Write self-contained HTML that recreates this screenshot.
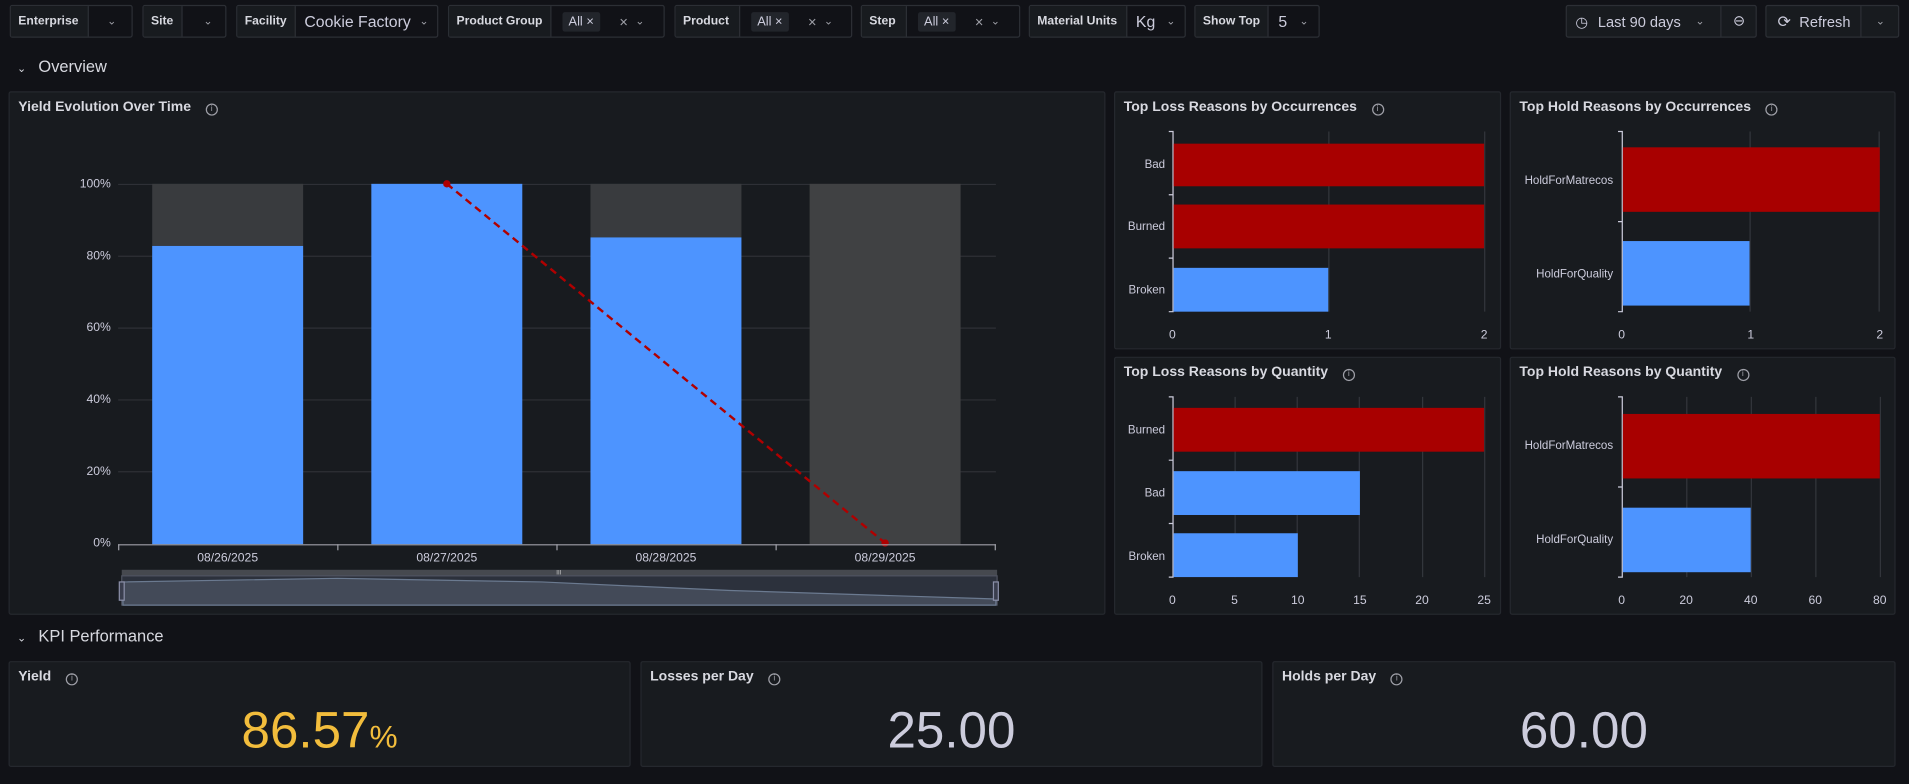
<!DOCTYPE html>
<html><head><meta charset="utf-8"><style>
*{box-sizing:border-box;margin:0;padding:0}
html,body{width:1909px;height:784px;overflow:hidden;background:#111217}
#w{position:absolute;left:0;top:0;width:1568px;height:644px;transform:scale(1.21747);transform-origin:0 0;font-family:"Liberation Sans",sans-serif;color:#ccccdc}
.a{position:absolute}
.box{position:absolute;top:4px;height:27px;border:1px solid #2c2f35;background:#111217;border-radius:2px;font-size:12px;display:flex;align-items:center;white-space:nowrap}
.lb{height:100%;display:flex;align-items:center;padding:0 6px;background:#181b1f;border-right:1px solid #2c2f35;font-weight:bold;font-size:10px;color:#d8d9e0;white-space:nowrap;overflow:hidden;flex:none}
.chip{background:#22252b;padding:2px 5px;font-size:10.5px;border-radius:2px;margin-left:9px}
.chev{font-size:9px;color:#9fa0a8}
.pan{position:absolute;background:#181b1f;border:1px solid #25282e;border-radius:2px}
.pt{position:absolute;left:7px;top:6px;font-size:11.5px;font-weight:bold;color:#d8d9e0;white-space:nowrap}
.i{display:inline-block;width:10px;height:10px;border:1px solid #9fa0a8;border-radius:50%;margin-left:12px;vertical-align:0px;font-size:7px;text-align:center;line-height:8px;color:#9fa0a8;font-weight:normal}
.sec{position:absolute;left:14px;font-size:13.5px;color:#d8d9e0}
.kv{position:absolute;top:32px;left:0;right:0;text-align:center;font-size:42px;color:#ccccdc}
</style></head><body><div id="w">
<div class="box" style="left:8px;width:101px"><div class="lb" style="width:64px">Enterprise</div><span class="chev" style="margin-left:15px">⌄</span></div>
<div class="box" style="left:117px;width:69px"><div class="lb" style="width:32px">Site</div><span class="chev" style="margin-left:17px">⌄</span></div>
<div class="box" style="left:194px;width:166px"><div class="lb" style="width:48px">Facility</div><span style="margin-left:7px;font-size:13px">Cookie Factory</span><span class="chev" style="margin-left:7px">⌄</span></div>
<div class="box" style="left:368px;width:178px"><div class="lb" style="width:84px">Product Group</div><span class="chip">All ×</span><span style="margin-left:16px;color:#9fa0a8">×</span><span class="chev" style="margin-left:6px">⌄</span></div>
<div class="box" style="left:554px;width:146px"><div class="lb" style="width:53px">Product</div><span class="chip">All ×</span><span style="margin-left:16px;color:#9fa0a8">×</span><span class="chev" style="margin-left:6px">⌄</span></div>
<div class="box" style="left:707px;width:131px"><div class="lb" style="width:37px">Step</div><span class="chip">All ×</span><span style="margin-left:16px;color:#9fa0a8">×</span><span class="chev" style="margin-left:6px">⌄</span></div>
<div class="box" style="left:845px;width:129px"><div class="lb" style="width:80px">Material Units</div><span style="margin-left:7px;font-size:13px">Kg</span><span class="chev" style="margin-left:9px">⌄</span></div>
<div class="box" style="left:981px;width:103px"><div class="lb" style="width:60px">Show Top</div><span style="margin-left:8px;font-size:13px">5</span><span class="chev" style="margin-left:10px">⌄</span></div>
<div class="box" style="left:1286px;width:157px;background:#181b1f"><span style="margin-left:7px;font-size:12px">◷</span><span style="margin-left:8px;font-size:12px">Last 90 days</span><span class="chev" style="margin-left:12px">⌄</span><span style="position:absolute;left:126px;top:0;bottom:0;border-left:1px solid #2c2f35;width:30px;text-align:center;line-height:25px">⊖</span></div>
<div class="box" style="left:1450px;width:110px;background:#181b1f"><span style="margin-left:9px;font-size:13px">⟳</span><span style="margin-left:7px;font-size:12px">Refresh</span><span style="position:absolute;left:77px;top:0;bottom:0;border-left:1px solid #2c2f35;width:32px;text-align:center;line-height:25px" class="chev">⌄</span></div>

<div class="sec" style="top:47px"><span style="font-size:9px;margin-right:10px">⌄</span>Overview</div>
<div class="sec" style="top:515px"><span style="font-size:9px;margin-right:10px">⌄</span>KPI Performance</div>

<div class="pan" style="left:7px;top:75px;width:901px;height:430px"><div class="pt">Yield Evolution Over Time<span class="i">i</span></div></div>
<svg class="a" style="left:0;top:0" width="1568" height="644">
<g stroke="#2e3036" stroke-width="1">
<line x1="97" x2="818" y1="151.5" y2="151.5"/><line x1="97" x2="818" y1="210.5" y2="210.5"/><line x1="97" x2="818" y1="269.5" y2="269.5"/><line x1="97" x2="818" y1="328.5" y2="328.5"/><line x1="97" x2="818" y1="387.5" y2="387.5"/></g>
<g fill="#393b3e"><rect x="125" y="151" width="124" height="51"/><rect x="485" y="151" width="124" height="44"/></g>
<rect x="665" y="151" width="124" height="296" fill="#404143"/>
<g fill="#4d94ff"><rect x="125" y="202" width="124" height="245"/><rect x="305" y="151" width="124" height="296"/><rect x="485" y="195" width="124" height="252"/></g>
<line x1="367" y1="151" x2="727" y2="446" stroke="#b00000" stroke-width="2" stroke-dasharray="6,4"/>
<circle cx="367" cy="151" r="3" fill="#b00000"/><circle cx="727" cy="446" r="3" fill="#b00000"/>
<g stroke="#9fa0a8"><line x1="97" x2="818" y1="447.5" y2="447.5"/><line x1="97.5" x2="97.5" y1="447" y2="452"/><line x1="277.5" x2="277.5" y1="447" y2="452"/><line x1="457.5" x2="457.5" y1="447" y2="452"/><line x1="637.5" x2="637.5" y1="447" y2="452"/><line x1="817.5" x2="817.5" y1="447" y2="452"/></g>
<rect x="100" y="468" width="719" height="5" fill="#46494f"/>
<rect x="100" y="473" width="719" height="24" fill="#2c313c" stroke="#4f5360"/>
<path d="M101 478 L277 475 L445 478 L600 485 L818 492 L818 497 L101 497Z" fill="#434a58" stroke="#6b7a90" stroke-width="1"/>
<rect x="98" y="478" width="4" height="15" fill="#3a3e4e" stroke="#8a8fa8"/><rect x="816" y="478" width="4" height="15" fill="#3a3e4e" stroke="#8a8fa8"/>
<text x="459" y="472" font-size="5" fill="#ccc" text-anchor="middle">III</text>
<g font-size="10" fill="#ccccdc" font-family="Liberation Sans" text-anchor="end">
<text x="91" y="154">100%</text><text x="91" y="213">80%</text><text x="91" y="272">60%</text><text x="91" y="331">40%</text><text x="91" y="390">20%</text><text x="91" y="449">0%</text></g>
<g font-size="10" fill="#ccccdc" font-family="Liberation Sans" text-anchor="middle">
<text x="187" y="461">08/26/2025</text><text x="367" y="461">08/27/2025</text><text x="547" y="461">08/28/2025</text><text x="727" y="461">08/29/2025</text></g>
</svg>

<div class="pan" style="left:915px;top:75px;width:318px;height:212px"><div class="pt">Top Loss Reasons by Occurrences<span class="i">i</span></div></div>
<div class="pan" style="left:1240px;top:75px;width:317px;height:212px"><div class="pt">Top Hold Reasons by Occurrences<span class="i">i</span></div></div>
<div class="pan" style="left:915px;top:293px;width:318px;height:212px"><div class="pt">Top Loss Reasons by Quantity<span class="i">i</span></div></div>
<div class="pan" style="left:1240px;top:293px;width:317px;height:212px"><div class="pt">Top Hold Reasons by Quantity<span class="i">i</span></div></div>
<svg class="a" style="left:0;top:0" width="1568" height="644" font-family="Liberation Sans" font-size="10">
<g stroke="#33363c"><line x1="1091.5" x2="1091.5" y1="108" y2="256"/><line x1="1219.5" x2="1219.5" y1="108" y2="256"/>
<line x1="1437.5" x2="1437.5" y1="108" y2="256"/><line x1="1543.5" x2="1543.5" y1="108" y2="256"/>
<line x1="1014.5" x2="1014.5" y1="326" y2="474"/><line x1="1065.5" x2="1065.5" y1="326" y2="474"/><line x1="1116.5" x2="1116.5" y1="326" y2="474"/><line x1="1168.5" x2="1168.5" y1="326" y2="474"/><line x1="1219.5" x2="1219.5" y1="326" y2="474"/>
<line x1="1385.5" x2="1385.5" y1="326" y2="474"/><line x1="1438.5" x2="1438.5" y1="326" y2="474"/><line x1="1491.5" x2="1491.5" y1="326" y2="474"/><line x1="1544.5" x2="1544.5" y1="326" y2="474"/></g>
<g stroke="#ccccdc" fill="none"><path d="M960 108H963.5V256H960M960 160H963M960 212H963"/><path d="M1329 108H1332.5V256H1329M1329 182H1332"/>
<path d="M960 326H963.5V474H960M960 378H963M960 430H963"/><path d="M1329 326H1332.5V474H1329M1329 400H1332"/></g>
<g fill="#a80000"><rect x="964" y="118" width="255" height="35"/><rect x="964" y="168" width="255" height="36"/><rect x="1333" y="121" width="211" height="53"/><rect x="964" y="335" width="255" height="36"/><rect x="1333" y="340" width="211" height="53"/></g>
<g fill="#4d94ff"><rect x="964" y="220" width="127" height="36"/><rect x="1333" y="198" width="104" height="53"/><rect x="964" y="387" width="153" height="36"/><rect x="964" y="438" width="102" height="36"/><rect x="1333" y="417" width="105" height="53"/></g>
<g fill="#ccccdc" text-anchor="end" font-size="9.5"><text x="957" y="138">Bad</text><text x="957" y="189">Burned</text><text x="957" y="241">Broken</text>
<text x="1325" y="151">HoldForMatrecos</text><text x="1325" y="228">HoldForQuality</text>
<text x="957" y="356">Burned</text><text x="957" y="408">Bad</text><text x="957" y="460">Broken</text>
<text x="1325" y="369">HoldForMatrecos</text><text x="1325" y="446">HoldForQuality</text></g>
<g fill="#ccccdc" text-anchor="middle"><text x="963" y="278">0</text><text x="1091" y="278">1</text><text x="1219" y="278">2</text>
<text x="1332" y="278">0</text><text x="1438" y="278">1</text><text x="1544" y="278">2</text>
<text x="963" y="496">0</text><text x="1014" y="496">5</text><text x="1066" y="496">10</text><text x="1117" y="496">15</text><text x="1168" y="496">20</text><text x="1219" y="496">25</text>
<text x="1332" y="496">0</text><text x="1385" y="496">20</text><text x="1438" y="496">40</text><text x="1491" y="496">60</text><text x="1544" y="496">80</text></g>
</svg>

<div class="pan" style="left:7px;top:543px;width:511px;height:87px"><div class="pt">Yield<span class="i">i</span></div><div class="kv" style="color:#f2bd3c">86.57<span style="font-size:26px">%</span></div></div>
<div class="pan" style="left:526px;top:543px;width:511px;height:87px"><div class="pt">Losses per Day<span class="i">i</span></div><div class="kv">25.00</div></div>
<div class="pan" style="left:1045px;top:543px;width:512px;height:87px"><div class="pt">Holds per Day<span class="i">i</span></div><div class="kv">60.00</div></div>
</div></body></html>
